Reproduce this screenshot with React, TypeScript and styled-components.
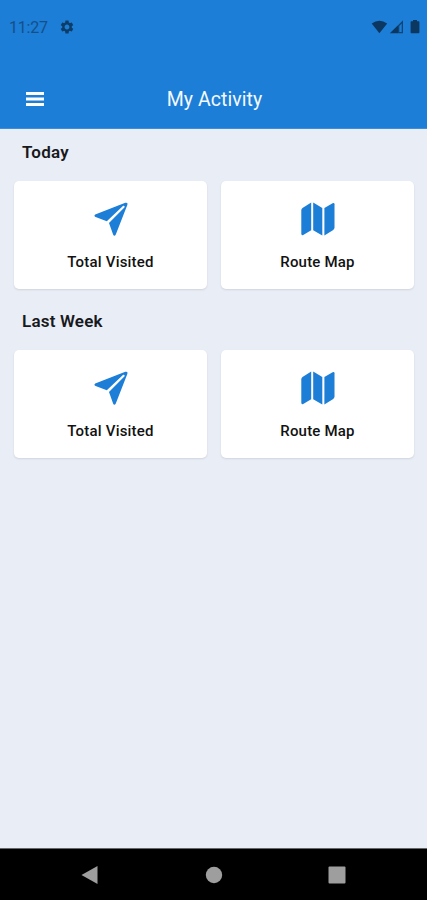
import React from "react";
import styled, { createGlobalStyle } from "styled-components";
import { MdSettings } from "react-icons/md";

const GlobalStyle = createGlobalStyle`
  * { box-sizing: border-box; }
  body { margin: 0; font-family: Roboto, sans-serif; background: #e9edf5; }
`;

const Screen = styled.div`
  display: flex;
  flex-direction: column;
  width: 427px;
  height: 900px;
  background: #e9edf5;
  overflow: hidden;
`;

const Header = styled.header`
  display: flex;
  flex-direction: column;
  height: 129px;
  flex: none;
  background: #1c7ed6;
  border-bottom: 1px solid #3f8fd8;
`;

const StatusBar = styled.div`
  display: flex;
  align-items: center;
  height: 54px;
  padding: 0 6px 0 9px;
  color: #0d3c69;
`;

const Clock = styled.span`
  width: 50px;
  font-size: 16px;
  line-height: 20px;
  letter-spacing: -0.2px;
  padding-top: 2px;
  color: #154f88;
`;

const StatusIcons = styled.div`
  display: flex;
  margin-left: auto;
`;

const AppBar = styled.div`
  display: grid;
  grid-template-columns: 70px 1fr 70px;
  align-items: center;
  height: 74px;
  padding-top: 16px;
`;

const MenuButton = styled.button`
  display: flex;
  justify-content: center;
  padding: 0 0 1px;
  border: 0;
  background: none;
`;

const Title = styled.h1`
  margin: 0;
  padding: 2px 0 0 2px;
  text-align: center;
  color: #f4f9ff;
  font-size: 19.5px;
  line-height: 24px;
  font-weight: 400;
  letter-spacing: 0.05px;
`;

const Content = styled.main`
  flex: 1;
  padding: 0 13px 0 14px;
`;

const Section = styled.section`
  height: 169px;
`;

const SectionTitle = styled.h2`
  margin: 0;
  padding: 13px 0 0 8px;
  height: 52px;
  font-size: 17px;
  line-height: 20px;
  font-weight: 600;
  letter-spacing: 0.2px;
  color: #17191d;
`;

const CardGrid = styled.div`
  display: grid;
  grid-template-columns: 1fr 1fr;
  gap: 14px;
`;

const Card = styled.div`
  display: flex;
  flex-direction: column;
  align-items: center;
  height: 108px;
  padding-top: 20px;
  border-radius: 5px;
  background: #fff;
  box-shadow: 0 1px 2px rgba(60, 65, 80, 0.14);
`;

const CardLabel = styled.span`
  margin-top: 15px;
  font-size: 15px;
  line-height: 20px;
  font-weight: 500;
  letter-spacing: 0.2px;
  color: #121212;
`;

const NavBar = styled.nav`
  display: flex;
  align-items: center;
  justify-content: space-between;
  height: 52px;
  padding: 0 81px 0 80px;
  background: #000;
  border-top: 1px solid #65676b;
`;

const PlaneIcon = () => (
  <svg width="36" height="36" viewBox="0 0 36 36" fill="#1c7ed6">
    <path d="M2.2 13.4 32.3 1.8Q35.2 1.1 34.4 3.8L22.8 33.4Q21.3 36 20.1 33.4L16 22 31.6 6.2Q32 4.6 30.2 4.8L13.8 20.2 2.6 16Q.5 14.7 2.2 13.4Z" />
  </svg>
);

const MapIcon = () => (
  <svg width="36" height="36" viewBox="0 0 36 36" fill="#1c7ed6">
    <path d="M11.2 1.5v27.7L3.2 34Q1.3 34.8 1.3 32.6V9.4Q1.3 7.8 2.5 7Z" />
    <path d="M13.2 1.5 22.3 7v27.4l-9.1-5.2Z" />
    <path d="M24.4 6.9 32.6 2.2Q34.5 1.4 34.5 3.3V26.5Q34.5 28 33.2 28.9L24.4 34.4Z" />
  </svg>
);

const items = [
  { label: "Total Visited", Icon: PlaneIcon },
  { label: "Route Map", Icon: MapIcon },
];

export default function App() {
  return (
    <>
      <GlobalStyle />
      <Screen>
        <Header>
          <StatusBar>
            <Clock>11:27</Clock>
            <MdSettings size={16} />
            <StatusIcons>
              <svg width="50" height="16" viewBox="0 0 50 16" fill="#0b3760">
                <path d="M.7 4.6Q8.4-1.2 16.2 4.6L8.4 14.2Z" />
                <path d="M18.8 14.3 27 6.3v8Z" />
                <path fillRule="evenodd" d="M27 6.3 32 1.3v13h-5ZM28.3 7v6.1h2.4V4.6Z" opacity=".8" />
                <path d="M42 1h4v1.2h1.6q.8 0 .8.8v10.5q0 .8-.8.8h-7.2q-.8 0-.8-.8V3q0-.8.8-.8H42Z" />
              </svg>
            </StatusIcons>
          </StatusBar>
          <AppBar>
            <MenuButton aria-label="Menu">
              <svg width="18" height="14" viewBox="0 0 18 14" fill="#fff">
                <path d="M0 0h18v3H0ZM0 5.5h18v3H0ZM0 11h18v3H0Z" />
              </svg>
            </MenuButton>
            <Title>My Activity</Title>
          </AppBar>
        </Header>
        <Content>
          {["Today", "Last Week"].map((title) => (
            <Section key={title}>
              <SectionTitle>{title}</SectionTitle>
              <CardGrid>
                {items.map(({ label, Icon }) => (
                  <Card key={label}>
                    <Icon />
                    <CardLabel>{label}</CardLabel>
                  </Card>
                ))}
              </CardGrid>
            </Section>
          ))}
        </Content>
        <NavBar>
          <svg width="19" height="20" viewBox="0 0 19 20">
            <path d="M1.5 10 17.5 1v18Z" fill="#9e9e9e" />
          </svg>
          <svg width="18" height="18" viewBox="0 0 18 18">
            <circle cx="9" cy="9" r="8.2" fill="#9e9e9e" />
          </svg>
          <svg width="18" height="18" viewBox="0 0 18 18">
            <rect x=".5" y=".5" width="17" height="17" rx="1" fill="#9e9e9e" />
          </svg>
        </NavBar>
      </Screen>
    </>
  );
}
